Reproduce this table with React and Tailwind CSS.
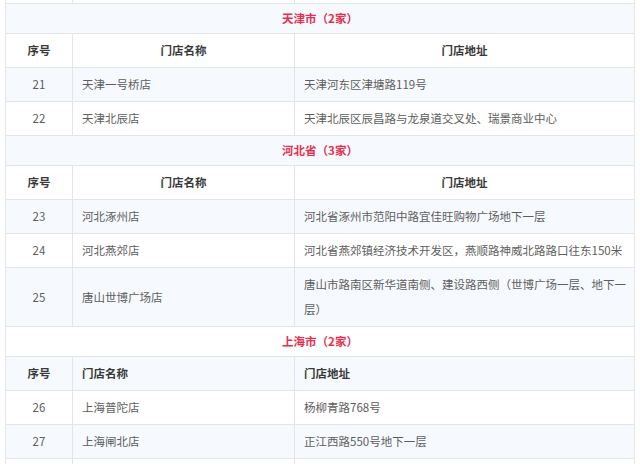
const sections = [
  {
    title: "天津市（2家）",
    headAlign: "center",
    rows: [
      ["21", "天津一号桥店", "天津河东区津塘路119号"],
      ["22", "天津北辰店", "天津北辰区辰昌路与龙泉道交叉处、瑞景商业中心"],
    ],
  },
  {
    title: "河北省（3家）",
    headAlign: "center",
    rows: [
      ["23", "河北涿州店", "河北省涿州市范阳中路宜佳旺购物广场地下一层"],
      ["24", "河北燕郊店", "河北省燕郊镇经济技术开发区，燕顺路神威北路路口往东150米"],
      ["25", "唐山世博广场店", ["唐山市路南区新华道南侧、建设路西侧（世博广场一层、地下一", "层）"]],
    ],
  },
  {
    title: "上海市（2家）",
    headAlign: "left",
    rows: [
      ["26", "上海普陀店", "杨柳青路768号"],
      ["27", "上海闸北店", "正江西路550号地下一层"],
    ],
  },
];

export default function App() {
  // flatten everything so the stripes run across the whole table
  const lines = [];
  sections.forEach((s) => {
    lines.push({ type: "section", title: s.title });
    lines.push({ type: "head", align: s.headAlign });
    s.rows.forEach((r) => lines.push({ type: "row", cells: r }));
  });

  const cell = "border border-[#e3e5e8] px-[9px] py-[4px] leading-[25px]";

  return (
    <div
      className="w-[640px] h-[464px] overflow-hidden bg-white pl-[5px]"
      style={{ fontFamily: '"Noto Sans CJK SC", "Noto Sans", sans-serif' }}
    >
      <table className="w-[630px] table-fixed border-collapse text-[11.5px] text-[#5e5e5e] -mt-px">
        <colgroup>
          <col className="w-[67px]" />
          <col className="w-[222px]" />
          <col />
        </colgroup>
        <tbody>
          <tr className="h-[4px] bg-white">
            <td className="border border-[#e3e5e8] p-0 text-[0px] leading-none" />
            <td className="border border-[#e3e5e8] p-0 text-[0px] leading-none" />
            <td className="border border-[#e3e5e8] p-0 text-[0px] leading-none" />
          </tr>
          {lines.map((l, i) => {
            const bg = i % 2 === 0 ? "bg-[#f6f9fd]" : "bg-white";
            if (l.type === "section") {
              return (
                <tr key={i} className={bg}>
                  <td
                    colSpan={3}
                    className="border border-[#e3e5e8] text-center leading-[21px] py-[4px] font-semibold text-[#e2324f]"
                  >
                    {l.title}
                  </td>
                </tr>
              );
            }
            if (l.type === "head") {
              const al = l.align === "left" ? "text-left" : "text-center";
              return (
                <tr key={i} className={`${bg} font-semibold text-[#3a3a3a]`}>
                  <td className={`${cell} text-center`}>序号</td>
                  <td className={`${cell} ${al}`}>门店名称</td>
                  <td className={`${cell} ${al}`}>门店地址</td>
                </tr>
              );
            }
            const [no, name, addr] = l.cells;
            return (
              <tr key={i} className={bg}>
                <td className={`${cell} text-center`}>{no}</td>
                <td className={cell}>{name}</td>
                <td className={cell}>
                  {Array.isArray(addr) ? (
                    <>
                      <span className="whitespace-nowrap">{addr[0]}</span>
                      <br />
                      {addr[1]}
                    </>
                  ) : (
                    addr
                  )}
                </td>
              </tr>
            );
          })}
          <tr className="bg-white">
            <td className={cell}>&nbsp;</td>
            <td className={cell}>&nbsp;</td>
            <td className={cell}>&nbsp;</td>
          </tr>
        </tbody>
      </table>
    </div>
  );
}
